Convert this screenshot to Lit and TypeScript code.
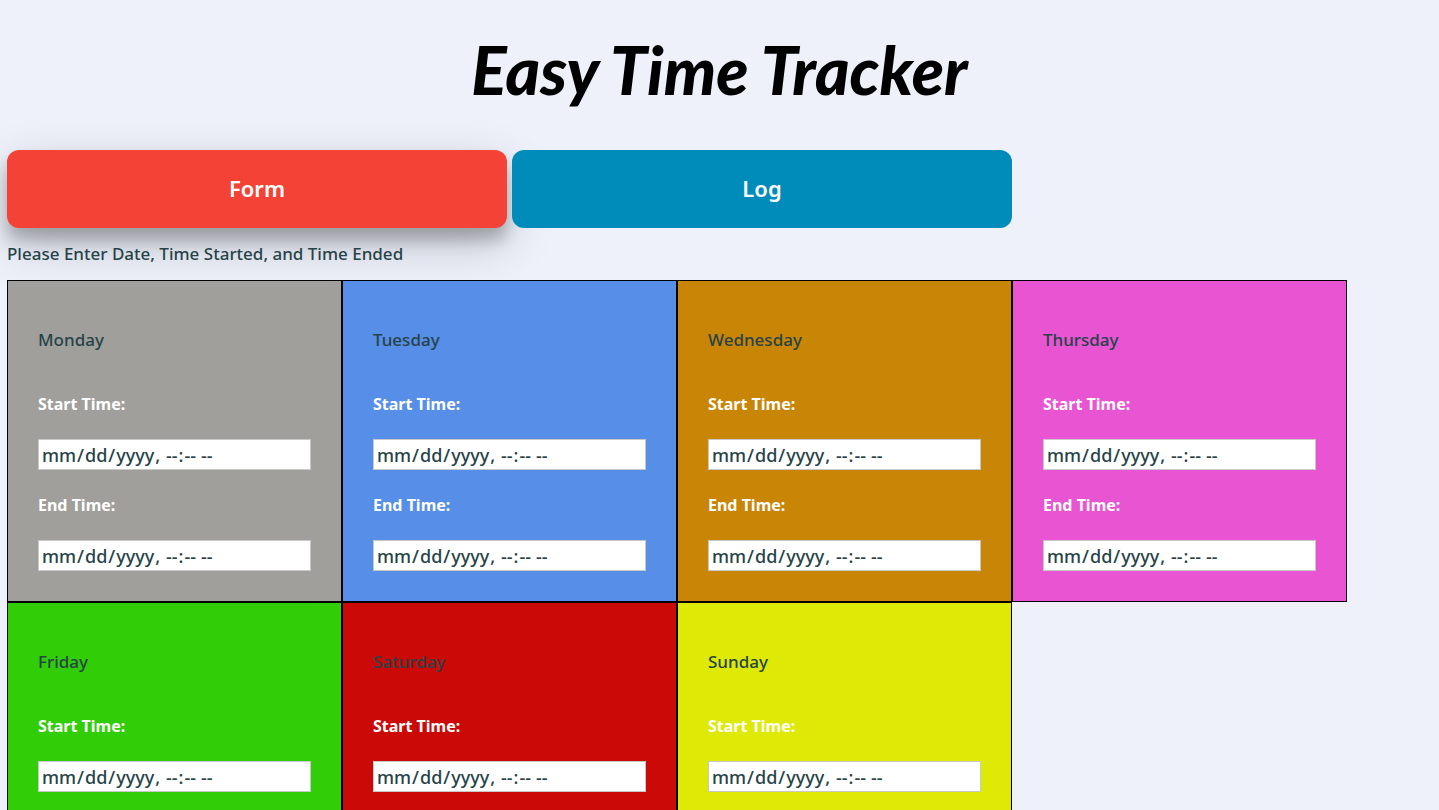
import { LitElement, html, css } from "lit";
import { customElement, property, state } from "lit/decorators.js";
import { classMap } from "lit/directives/class-map.js";

const DAYS = ["Monday", "Tuesday", "Wednesday", "Thursday", "Friday", "Saturday", "Sunday"];

@customElement("day-card")
export class DayCard extends LitElement {
  @property() day = "";

  static styles = css`
    :host {
      display: block;
      box-sizing: border-box;
      border: 1px solid #000;
      padding: 30px;
    }
    .day {
      margin: 0;
      font-size: 17px;
      font-weight: 500;
      line-height: 58px;
    }
    .field {
      display: block;
      line-height: 70px;
      font-size: 16px;
      font-weight: 700;
      color: #fff;
    }
    .time {
      display: block;
      box-sizing: border-box;
      width: 100%;
      height: 31px;
      margin: 0;
      padding: 0 2px;
      border: 1px solid #c8c8c8;
      border-radius: 0;
      background: #fff;
      color: #264348;
      font: inherit;
      font-size: 18px;
      font-weight: 500;
    }
    .time::-webkit-calendar-picker-indicator {
      display: none;
    }
  `;

  render() {
    return html`
      <h2 class="day">${this.day}</h2>
      <label class="field" for="start">Start Time:</label>
      <input class="time" id="start" type="datetime-local" />
      <label class="field" for="end">End Time:</label>
      <input class="time" id="end" type="datetime-local" />
    `;
  }
}

@customElement("app-root")
export class AppRoot extends LitElement {
  @state() private tab = "Form";

  static styles = css`
    :host {
      display: block;
      box-sizing: border-box;
      min-height: 100vh;
      padding: 0 7px;
      background: #eef1fa;
      color: #264348;
      font-family: "Noto Sans", "Open Sans", sans-serif;
      font-size: 17px;
    }
    .title {
      margin: 0;
      padding-bottom: 10px;
      line-height: 140px;
      text-align: center;
      font-family: Lato, sans-serif;
      font-size: 66px;
      font-style: italic;
      font-weight: 900;
      color: #000;
    }
    .tabs {
      display: flex;
      flex-wrap: wrap;
      gap: 5px;
    }
    .tab {
      width: 500px;
      height: 78px;
      padding: 0 0 2px;
      border: 0;
      border-radius: 12px;
      background: #008cba;
      color: #fff;
      font: inherit;
      font-size: 22px;
      font-weight: 600;
      cursor: pointer;
    }
    .active {
      background: #f44336;
      box-shadow: 0 12px 16px 0 rgba(0, 0, 0, 0.24), 0 17px 50px 0 rgba(0, 0, 0, 0.19);
    }
    .hint {
      position: relative;
      margin: 0;
      line-height: 52px;
      font-weight: 500;
    }
    .week {
      position: relative;
      display: grid;
      grid-template-columns: repeat(auto-fill, 335px);
    }
    .monday { background: #a09f9c; }
    .tuesday { background: #568ee8; }
    .wednesday { background: #c98505; }
    .thursday { background: #e854d1; }
    .friday { background: #31cd07; }
    .saturday { background: #cb0907; }
    .sunday { background: #dfe906; }
  `;

  render() {
    return html`
      <h1 class="title">Easy Time Tracker</h1>
      <div class="tabs">
        ${["Form", "Log"].map(
          (name) => html`<button
            type="button"
            class=${classMap({ tab: true, active: this.tab === name })}
            @click=${() => (this.tab = name)}
          >${name}</button>`
        )}
      </div>
      <p class="hint">Please Enter Date, Time Started, and Time Ended</p>
      <div class="week">
        ${DAYS.map((day) => html`<day-card class=${day.toLowerCase()} .day=${day}></day-card>`)}
      </div>
    `;
  }
}
